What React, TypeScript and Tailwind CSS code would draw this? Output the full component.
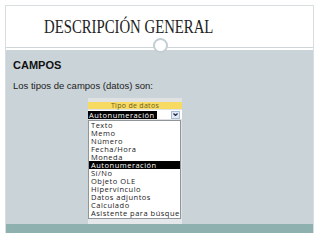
const tipos = [
  "Texto",
  "Memo",
  "Número",
  "Fecha/Hora",
  "Moneda",
  "Autonumeración",
  "Sí/No",
  "Objeto OLE",
  "Hipervínculo",
  "Datos adjuntos",
  "Calculado",
  "Asistente para búsqueda",
];

function TipoDatos() {
  return (
    <div className="w-[94px] ml-[75px] mt-[7px] bg-[#dfe1e2] pt-[4px] font-['Open_Sans',sans-serif] text-[7.5px] leading-[8px]">
      <div className="h-[7px] bg-[#f6da62] text-center text-[#6b5a1e] text-[7px] leading-[7px] tracking-[0.3px]">
        Tipo de datos
      </div>
      <div className="h-[9px] mt-[1px] flex items-center bg-white">
        <span className="bg-black text-white px-[1px] h-[8px] w-[69px] tracking-[0.5px] overflow-hidden whitespace-nowrap">
          Autonumeración
        </span>
        <span className="ml-auto mr-[2px] w-[9px] h-[8px] bg-[#dfe8f3] border border-[#a9bdd6] flex items-center justify-center">
          <svg width="5" height="3" viewBox="0 0 5 3">
            <path d="M0.5 0.5 L2.5 2.5 L4.5 0.5" fill="none" stroke="#1f2a44" strokeWidth="1.2" />
          </svg>
        </span>
      </div>
      <div className="mt-[1px] w-[93px] h-[99px] bg-white border border-[#8f9598] overflow-hidden">
        {tipos.map((t) => (
          <div
            key={t}
            className={
              t === "Autonumeración"
                ? "h-[8px] pl-[2px] bg-black text-white tracking-[0.5px] whitespace-nowrap"
                : "h-[8px] pl-[2px] text-[#1a1a1a] tracking-[0.5px] whitespace-nowrap"
            }
          >
            {t}
          </div>
        ))}
      </div>
      <div className="h-[5px] bg-[#e4e8ea]" />
    </div>
  );
}

export default function App() {
  return (
    <div className="w-[320px] h-[240px] bg-white pt-[5px] pl-[5px] pr-[6px]">
      <div className="h-[228px] flex flex-col border-l border-t border-r border-[#d8dde0]">
        <div className="relative h-[43px] bg-white">
          <div className="pl-[38px] pt-[10px] text-[18px] leading-[22px] text-[#222] font-['Liberation_Serif',serif]">
            <span className="inline-block origin-left scale-x-[0.82] whitespace-nowrap">
              DESCRIPCIÓN GENERAL
            </span>
          </div>
          <div className="absolute left-0 right-0 bottom-[-1px] h-px bg-[#cfd6da]" />
          <div className="absolute left-[147px] top-[32px] w-[15px] h-[15px] rounded-full bg-white border-2 border-[#c3ced3] z-10" />
        </div>
        <div className="h-[4px] bg-white" />
        <div className="flex-1 bg-[#c9d3d8] pt-[9px] pl-[7px] font-['Liberation_Sans',Arial,sans-serif]">
          <div className="text-[11px] leading-[13px] font-bold text-[#111]">CAMPOS</div>
          <div className="mt-[8px] text-[9.5px] leading-[11px] text-[#222]">
            Los tipos de campos (datos) son:
          </div>
          <TipoDatos />
        </div>
        <div className="h-[9px] bg-[#8eb0ae]" />
      </div>
    </div>
  );
}
